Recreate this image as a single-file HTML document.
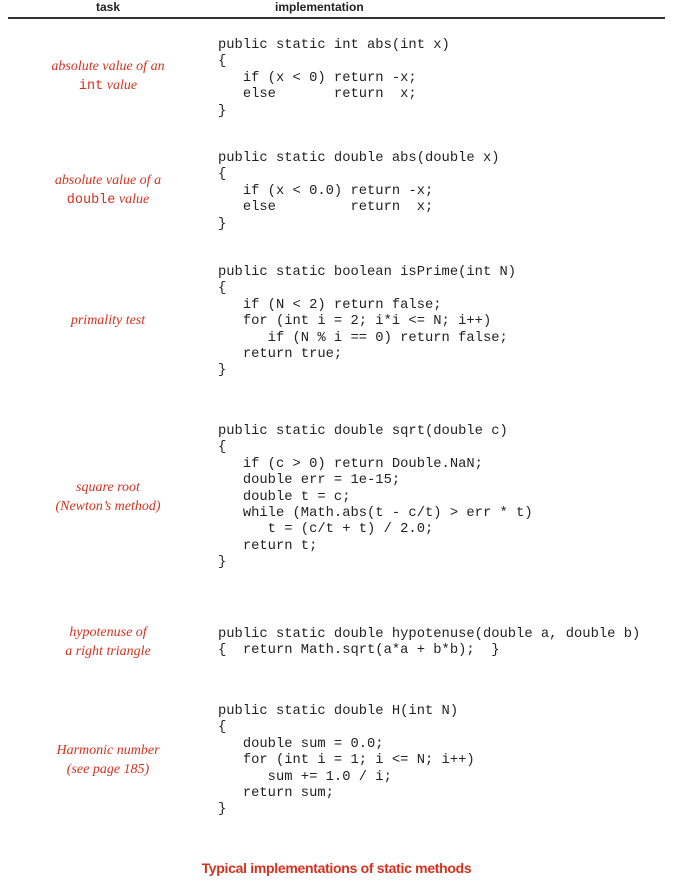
<!DOCTYPE html>
<html><head><style>
body{margin:0;width:673px;height:888px;background:#fff;position:relative;overflow:hidden}
.h{position:absolute;top:0px;font:bold 12px "Liberation Sans",sans-serif;color:#222}
.rule{position:absolute;left:8px;top:17px;width:657px;height:1.5px;background:#333}
pre{position:absolute;left:218px;margin:0;font:13.8px/16.4px "Liberation Mono",monospace;color:#222}
.l{position:absolute;left:8px;width:200px;text-align:center;font:italic 14px/18.5px "Liberation Serif",serif;color:#d2321e}
.l code{font:normal 13.5px "Liberation Mono",monospace}
.cap{position:absolute;left:0;width:673px;top:860px;text-align:center;font:bold 14px "Liberation Sans",sans-serif;color:#d2321e;letter-spacing:-0.3px}
</style></head><body>
<div class="h" style="left:96px">task</div>
<div class="h" style="left:275px">implementation</div>
<div class="rule"></div>

<div class="l" style="top:58px">absolute value of an<br><code>int</code> value</div>
<pre style="top:38px">public static int abs(int x)
{
   if (x &lt; 0) return -x;
   else       return  x;
}</pre>

<div class="l" style="top:172px">absolute value of a<br><code>double</code> value</div>
<pre style="top:151px">public static double abs(double x)
{
   if (x &lt; 0.0) return -x;
   else         return  x;
}</pre>

<div class="l" style="top:312px">primality test</div>
<pre style="top:265px">public static boolean isPrime(int N)
{
   if (N &lt; 2) return false;
   for (int i = 2; i*i &lt;= N; i++)
      if (N % i == 0) return false;
   return true;
}</pre>

<div class="l" style="top:479px">square root<br>(Newton’s method)</div>
<pre style="top:424px">public static double sqrt(double c)
{
   if (c &gt; 0) return Double.NaN;
   double err = 1e-15;
   double t = c;
   while (Math.abs(t - c/t) &gt; err * t)
      t = (c/t + t) / 2.0;
   return t;
}</pre>

<div class="l" style="top:624px">hypotenuse of<br>a right triangle</div>
<pre style="top:627px">public static double hypotenuse(double a, double b)
{  return Math.sqrt(a*a + b*b);  }</pre>

<div class="l" style="top:742px">Harmonic number<br>(see page 185)</div>
<pre style="top:704px">public static double H(int N)
{
   double sum = 0.0;
   for (int i = 1; i &lt;= N; i++)
      sum += 1.0 / i;
   return sum;
}</pre>

<div class="cap">Typical implementations of static methods</div>
</body></html>
